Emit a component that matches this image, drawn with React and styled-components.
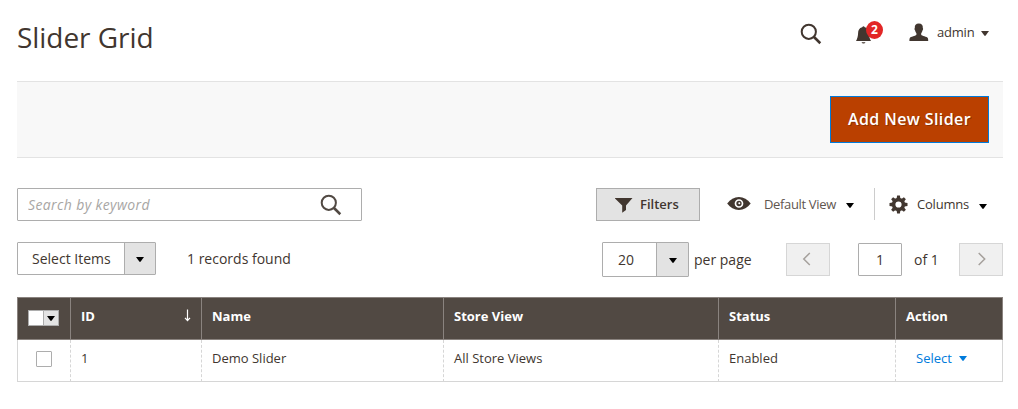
import React from "react";
import styled, { createGlobalStyle } from "styled-components";

const GlobalStyle = createGlobalStyle`
  *, *::before, *::after { box-sizing: border-box; }
  body {
    margin: 0;
    background: #fff;
    color: #41362f;
    font-family: "Open Sans", "Noto Sans", sans-serif;
    font-size: 14px;
    line-height: 20px;
  }
  button, input { font: inherit; color: inherit; margin: 0; padding: 0; }
  svg { display: block; flex: none; }
`;

const Page = styled.main`
  width: 1018px;
  height: 409px;
  padding: 0 15px 0 17px;
  overflow: hidden;
`;

const Header = styled.header`
  display: flex;
  height: 81px;
  justify-content: space-between;
`;

const Title = styled.h1`
  margin: 17px 0 0;
  font-size: 28px;
  line-height: 40px;
  font-weight: 400;
  letter-spacing: -0.05px;
  white-space: nowrap;
`;

const HeaderTools = styled.div`
  display: flex;
  align-items: flex-start;
  width: 203px;
  padding-top: 23px;
`;

const Notifications = styled.div`
  position: relative;
  margin: 3px 0 0 34px;
`;

const Badge = styled.span`
  position: absolute;
  left: 10px;
  top: -5px;
  width: 17px;
  height: 18px;
  border-radius: 50%;
  background: #e22626;
  color: #fff;
  font-size: 12px;
  font-weight: 700;
  line-height: 18px;
  text-align: center;
`;

const UserMenu = styled.div`
  display: flex;
  margin-left: 38px;
  font-size: 13px;
  gap: 8px;
`;

const UserName = styled.span`
  width: 37px;
  margin-top: -1px;
  margin-right: -1px;
  letter-spacing: -0.2px;
  white-space: nowrap;
`;

const CaretShape = styled.svg`
  margin-top: ${(p) => p.$top || 0}px;
  margin-left: ${(p) => p.$left || 0}px;
`;

const ActionBar = styled.section`
  display: flex;
  justify-content: flex-end;
  height: 77px;
  padding: 14px 14px 0 0;
  border-top: 1px solid #e3e3e3;
  border-bottom: 1px solid #e3e3e3;
  background: #f8f8f8;
`;

const PrimaryButton = styled.button`
  width: 159px;
  height: 47px;
  padding-bottom: 2px;
  border: 1px solid #007bdb;
  background: #ba4000;
  color: #fff;
  font-size: 16px;
  font-weight: 600;
  letter-spacing: 0.4px;
  text-shadow: 1px 1px 0 rgba(0, 0, 0, 0.25);
  white-space: nowrap;
`;

const Toolbar = styled.div`
  display: flex;
  align-items: flex-start;
  height: 33px;
  margin-top: 30px;
`;

const PagingBar = styled(Toolbar)`
  height: 35px;
  margin-top: 21px;
`;

const SearchBox = styled.div`
  display: flex;
  align-items: center;
  justify-content: space-between;
  width: 345px;
  height: 33px;
  padding: 0 19px 0 10px;
  border: 1px solid #adadad;
  border-radius: 1px;
`;

const SearchInput = styled.input`
  width: 220px;
  height: 24px;
  border: 0;
  outline: 0;
  background: transparent;
  &::placeholder {
    color: #a8a6a4;
    font-style: italic;
    letter-spacing: 0.38px;
    opacity: 1;
  }
`;

const FiltersButton = styled.button`
  display: flex;
  align-items: center;
  gap: 7px;
  width: 104px;
  height: 33px;
  margin-left: 234px;
  padding-left: 18px;
  border: 1px solid #adadad;
  background: #e3e3e3;
  font-size: 13px;
  font-weight: 600;
`;

const ViewControl = styled.div`
  display: flex;
  align-items: center;
  width: 175px;
  height: 32px;
  padding-left: 27px;
  border-right: 1px solid #cccccc;
  color: #5f564f;
  font-size: 13px;
`;

const ColumnsControl = styled(ViewControl)`
  width: auto;
  padding-left: 14px;
  border-right: 0;
  color: #41362f;
`;

const ControlLabel = styled.span`
  width: ${(p) => p.$width}px;
  margin-left: ${(p) => p.$left}px;
  letter-spacing: ${(p) => p.$track || 0}px;
  white-space: nowrap;
`;

const ButtonLabel = styled.span`
  padding-bottom: 2px;
`;

const SelectBox = styled.div`
  display: flex;
  width: ${(p) => p.$width}px;
  height: ${(p) => p.$height}px;
  border: 1px solid #adadad;
  border-radius: 1px;
`;

const SelectValue = styled.div`
  flex: 1;
  padding-left: ${(p) => p.$pad}px;
  line-height: ${(p) => p.$line}px;
  white-space: nowrap;
`;

const SelectArrow = styled.div`
  display: flex;
  align-items: center;
  justify-content: center;
  width: ${(p) => p.$width}px;
  border-left: 1px solid #adadad;
  background: #e3e3e3;
`;

const RecordCount = styled.span`
  width: 446px;
  padding: 7px 0 0 31px;
`;

const PagingText = styled.span`
  width: ${(p) => p.$width}px;
  padding: 8px 0 0 ${(p) => p.$pad}px;
  white-space: nowrap;
`;

const PageButton = styled.button`
  display: flex;
  align-items: center;
  justify-content: center;
  width: 44px;
  height: 33px;
  padding: 0 3px 2px 0;
  margin-top: 1px;
  border: 1px solid #d6d6d6;
  background: #f0f0f0;
`;

const NextButton = styled(PageButton)`
  padding: 0 0 2px 2px;
`;

const PageInput = styled.input`
  width: 44px;
  height: 33px;
  margin: 1px 0 0 28px;
  border: 1px solid #adadad;
  border-radius: 1px;
  text-align: center;
`;

const Table = styled.table`
  width: 986px;
  margin-top: 20px;
  border-collapse: separate;
  border-spacing: 0;
  table-layout: fixed;
  font-size: 13px;
`;

const HeadCell = styled.th`
  height: 43px;
  padding: 0 10px 6px;
  border: 1px solid #8a837f;
  border-right-width: 0;
  background: #514943;
  color: #fff;
  font-weight: 700;
  text-align: left;
  &:first-child { padding-bottom: 4px; }
  &:last-child { border-right-width: 1px; }
`;

const Cell = styled.td`
  height: 42px;
  padding: 0 ${(p) => p.$pad || 10}px 6px;
  border-bottom: 1px solid #d6d6d6;
  border-left: 1px dashed #d6d6d6;
  &:first-child { border-left-style: solid; padding: 0 18px 3px; }
  &:last-child { border-right: 1px solid #d6d6d6; }
`;

const SortLabel = styled.div`
  display: flex;
  align-items: center;
  justify-content: space-between;
`;

const MultiCheck = styled.div`
  display: flex;
  width: 31px;
  height: 16px;
  margin-top: 3px;
  border: 1px solid #adadad;
  background: #fff;
`;

const MultiArrow = styled.span`
  display: flex;
  align-items: center;
  justify-content: center;
  width: 15px;
  margin-left: auto;
  border-left: 1px solid #adadad;
  background: #e3e3e3;
`;

const Checkbox = styled.div`
  width: 16px;
  height: 16px;
  border: 1px solid #adadad;
  border-radius: 1px;
  background: #fff;
`;

const RowAction = styled.div`
  display: flex;
  align-items: center;
  gap: 7px;
  color: #007bdb;
`;

const Caret = ({ color = "#000", top, left }) => (
  <CaretShape $top={top} $left={left} width="8" height="5" viewBox="0 0 8 5">
    <path d="M0 0h8L4.7 4.6Q4 5.2 3.3 4.6z" fill={color} />
  </CaretShape>
);

const SearchIcon = ({ color = "#41362f" }) => (
  <svg width="22" height="22" viewBox="0 0 22 22" fill="none" stroke={color}>
    <circle cx="8.8" cy="8.8" r="7.1" strokeWidth="2" />
    <path d="M14 14l6.300 6.200" strokeWidth="2.600" />
  </svg>
);

const BellIcon = () => (
  <svg width="15" height="18" viewBox="0 0 15 18" fill="#41362f">
    <path d="M6.2 1.200Q7.500-.7 8.800 1.200C11.900 2 12.800 4.300 12.900 7c.1 3.200.7 5.700 2.100 8H0c1.400-2.300 2-4.800 2.100-8 .1-2.700 1-5 4.100-5.800zM5.500 16.200h4q-.5 1.300-2 1.300t-2-1.300z" />
  </svg>
);

const UserIcon = () => (
  <svg width="20" height="19" viewBox="0 0 20 19" fill="#41362f">
    <path d="M9.800.6c2.900 0 4.200 1.700 4 4.500.5.400.4 1.800-.3 2.400-.2 1.200-.7 2-1.300 2.700v1.600c.5 1.300 5.800 1.700 6.700 3.400.3.700.3 1.900.3 2.800H.4c0-.9 0-2.100.3-2.800.9-1.700 6.200-2.100 6.700-3.400v-1.600c-.6-.7-1.100-1.500-1.300-2.700-.7-.6-.8-2-.3-2.400C5.600 2.300 6.900.6 9.800.6z" />
  </svg>
);

const FunnelIcon = () => (
  <svg width="18" height="16" viewBox="0 0 18 16" fill="#41362f">
    <path d="M-.5 1h18L11 8.500V13l-3.800 2.700V8.500z" />
  </svg>
);

const EyeIcon = () => (
  <svg width="24" height="14" viewBox="0 0 24 14">
    <path fill="#41362f" d="M.2 6.500C3.300 2.200 7.200 0 11.900 0S20.600 2.200 23.700 6.500c-3.100 4.300-7.100 6.500-11.800 6.500S3.300 10.800.2 6.500z" />
    <circle cx="12" cy="6.500" r="3.500" fill="#41362f" stroke="#fff" strokeWidth="1.700" />
    <circle cx="12.300" cy="6.200" r="1" fill="#fff" />
  </svg>
);

const GearIcon = () => (
  <svg width="19" height="19" viewBox="0 0 19 19">
    <circle cx="9.500" cy="9.500" r="4.900" fill="none" stroke="#41362f" strokeWidth="3.600" />
    {[0, 45, 90, 135, 180, 225, 270, 315].map((angle) => (
      <path key={angle} transform={`rotate(${angle} 9.500 9.500)`} d="M7.600 3.500L8.100.5h2.800l.5 3z" fill="#41362f" />
    ))}
  </svg>
);

const Chevron = ({ flip }) => (
  <svg width="10" height="14" viewBox="0 0 10 14" fill="none" stroke="#a5a09c" strokeWidth="1.500">
    <path d={flip ? "M1.700 1l6 6-6 6" : "M7.800 1l-6 6 6 6"} />
  </svg>
);

const SortArrow = () => (
  <svg width="7" height="13" viewBox="0 0 7 13" fill="none" stroke="#fff" strokeWidth="1.200">
    <path d="M3.500.5v11M1 8.800l2.500 2.900L6 8.800" />
  </svg>
);

export default function App() {
  return (
    <>
      <GlobalStyle />
      <Page>
        <Header>
          <Title>Slider Grid</Title>
          <HeaderTools>
            <SearchIcon />
            <Notifications>
              <BellIcon />
              <Badge>2</Badge>
            </Notifications>
            <UserMenu>
              <UserIcon />
              <UserName>admin</UserName>
              <Caret color="#41362f" top={8} />
            </UserMenu>
          </HeaderTools>
        </Header>

        <ActionBar>
          <PrimaryButton>Add New Slider</PrimaryButton>
        </ActionBar>

        <Toolbar>
          <SearchBox>
            <SearchInput placeholder="Search by keyword" />
            <SearchIcon color="#514943" />
          </SearchBox>
          <FiltersButton>
            <FunnelIcon />
            <ButtonLabel>Filters</ButtonLabel>
          </FiltersButton>
          <ViewControl>
            <EyeIcon />
            <ControlLabel $width={72} $left={13} $track={-0.34}>Default View</ControlLabel>
            <Caret left={10} top={2} />
          </ViewControl>
          <ColumnsControl>
            <GearIcon />
            <ControlLabel $width={52} $left={9} $track={-0.2}>Columns</ControlLabel>
            <Caret left={10} top={4} />
          </ColumnsControl>
        </Toolbar>

        <PagingBar>
          <SelectBox $width={139} $height={33}>
            <SelectValue $pad={14} $line={32}>Select Items</SelectValue>
            <SelectArrow $width={31}><Caret top={2} /></SelectArrow>
          </SelectBox>
          <RecordCount>1 records found</RecordCount>
          <SelectBox $width={87} $height={35}>
            <SelectValue $pad={15} $line={34}>20</SelectValue>
            <SelectArrow $width={32}><Caret top={2} /></SelectArrow>
          </SelectBox>
          <PagingText $width={97} $pad={5}>per page</PagingText>
          <PageButton aria-label="Previous page"><Chevron /></PageButton>
          <PageInput defaultValue="1" />
          <PagingText $width={57} $pad={12}>of 1</PagingText>
          <NextButton aria-label="Next page"><Chevron flip /></NextButton>
        </PagingBar>

        <Table>
          <colgroup>
            <col width="53" />
            <col width="131" />
            <col width="242" />
            <col width="275" />
            <col width="177" />
            <col width="108" />
          </colgroup>
          <thead>
            <tr>
              <HeadCell>
                <MultiCheck>
                  <MultiArrow><Caret top={1} /></MultiArrow>
                </MultiCheck>
              </HeadCell>
              <HeadCell><SortLabel>ID<SortArrow /></SortLabel></HeadCell>
              <HeadCell>Name</HeadCell>
              <HeadCell>Store View</HeadCell>
              <HeadCell>Status</HeadCell>
              <HeadCell>Action</HeadCell>
            </tr>
          </thead>
          <tbody>
            <tr>
              <Cell><Checkbox /></Cell>
              <Cell>1</Cell>
              <Cell>Demo Slider</Cell>
              <Cell>All Store Views</Cell>
              <Cell>Enabled</Cell>
              <Cell $pad={20}><RowAction>Select<Caret color="#007bdb" top={1} /></RowAction></Cell>
            </tr>
          </tbody>
        </Table>
      </Page>
    </>
  );
}
